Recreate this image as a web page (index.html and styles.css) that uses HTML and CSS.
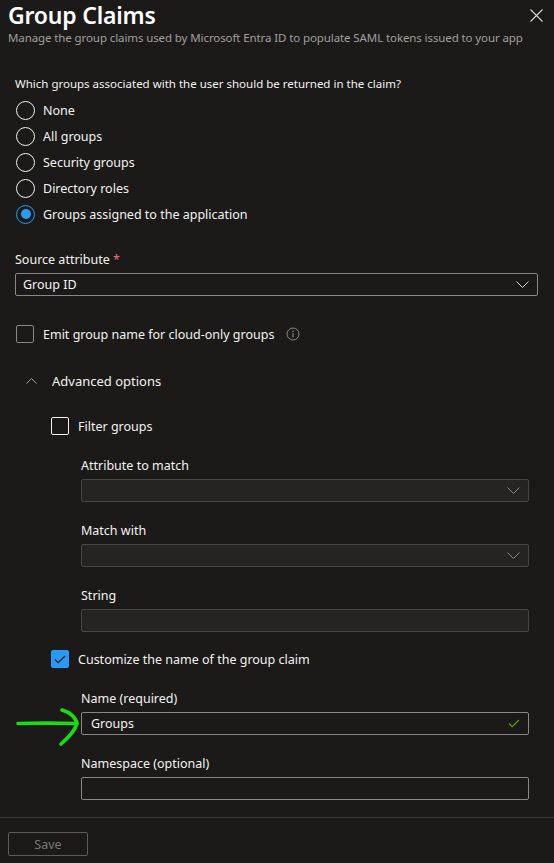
FILE: index.html
```html
<!DOCTYPE html>
<html lang="en">
<head>
  <meta charset="utf-8">
  <meta name="viewport" content="width=device-width, initial-scale=1.0">
  <title>Group Claims</title>
  <link rel="stylesheet" href="styles.css">
</head>
<body>
  <div class="panel">
    <div class="panel-header">
      <div>
        <h1>Group Claims</h1>
        <p class="subtitle">Manage the group claims used by Microsoft Entra ID to populate SAML tokens issued to your app</p>
      </div>
      <button class="close-button" aria-label="Close">
        <svg width="13" height="13" viewBox="0 0 13 13"><path d="M0.5 0.5 L12.5 12.5 M12.5 0.5 L0.5 12.5" stroke="#d6d6d6" stroke-width="1.1" fill="none"/></svg>
      </button>
    </div>

    <div class="panel-body">
      <p class="question">Which groups associated with the user should be returned in the claim?</p>
      <div class="radio-list">
        <label class="radio-row"><span class="radio"></span>None</label>
        <label class="radio-row"><span class="radio"></span>All groups</label>
        <label class="radio-row"><span class="radio"></span>Security groups</label>
        <label class="radio-row"><span class="radio"></span>Directory roles</label>
        <label class="radio-row"><span class="radio checked"></span>Groups assigned to the application</label>
      </div>

      <div class="field source-field">
        <div class="field-label">Source attribute <span class="required">*</span></div>
        <div class="select">
          <span>Group ID</span>
          <svg class="chevron" width="13" height="7" viewBox="0 0 13 7"><path d="M0.5 0.5 L6.5 6.5 L12.5 0.5" stroke="#d6d6d6" stroke-width="1" fill="none"/></svg>
        </div>
      </div>

      <label class="check-row emit-row">
        <span class="checkbox"></span>Emit group name for cloud-only groups
        <svg class="info" width="14" height="14" viewBox="0 0 14 14"><circle cx="7" cy="7" r="6" stroke="#8a8886" stroke-width="1" fill="none"/><circle cx="7" cy="4.2" r="0.8" fill="#8a8886"/><path d="M7 6 V10.5" stroke="#8a8886" stroke-width="1.1"/></svg>
      </label>

      <div class="advanced">
        <div class="advanced-toggle">
          <svg width="11" height="6" viewBox="0 0 11 6"><path d="M0.5 5.5 L5.5 0.5 L10.5 5.5" stroke="#a19f9d" stroke-width="1" fill="none"/></svg>
          <span>Advanced options</span>
        </div>

        <div class="advanced-body">
          <label class="check-row filter-row"><span class="checkbox light"></span>Filter groups</label>

          <div class="sub-fields">
            <div class="field">
              <div class="field-label">Attribute to match</div>
              <div class="select disabled">
                <svg class="chevron" width="13" height="7" viewBox="0 0 13 7"><path d="M0.5 0.5 L6.5 6.5 L12.5 0.5" stroke="#8a8886" stroke-width="1" fill="none"/></svg>
              </div>
            </div>
            <div class="field">
              <div class="field-label">Match with</div>
              <div class="select disabled">
                <svg class="chevron" width="13" height="7" viewBox="0 0 13 7"><path d="M0.5 0.5 L6.5 6.5 L12.5 0.5" stroke="#8a8886" stroke-width="1" fill="none"/></svg>
              </div>
            </div>
            <div class="field">
              <div class="field-label">String</div>
              <div class="select disabled"></div>
            </div>
          </div>

          <label class="check-row customize-row">
            <span class="checkbox checked">
              <svg width="12" height="9" viewBox="0 0 12 9"><path d="M1 4.5 L4.2 7.7 L11 1" stroke="#1b1a19" stroke-width="1.2" fill="none"/></svg>
            </span>Customize the name of the group claim
          </label>

          <div class="sub-fields name-fields">
            <div class="field name-field">
              <div class="field-label">Name (required)</div>
              <div class="select">
                <span>Groups</span>
                <svg class="valid" width="12" height="9" viewBox="0 0 12 9"><path d="M1 4.5 L4.2 7.7 L11 1" stroke="#57a300" stroke-width="1.1" fill="none"/></svg>
              </div>
              <svg class="arrow" width="66" height="50" viewBox="0 0 66 50">
                <path d="M3 24.5 C 20 24, 42 24, 62 24.5" stroke="#19dd12" stroke-width="3.6" fill="none" stroke-linecap="round"/>
                <path d="M47 11 C 55 13, 61 19, 62 24.5 C 60 32, 53 39, 46 45" stroke="#19dd12" stroke-width="3.6" fill="none" stroke-linecap="round"/>
              </svg>
            </div>
            <div class="field">
              <div class="field-label">Namespace (optional)</div>
              <div class="select"></div>
            </div>
          </div>
        </div>
      </div>
    </div>

    <div class="panel-footer">
      <button class="save-button" disabled>Save</button>
    </div>
  </div>
</body>
</html>
```

FILE: styles.css
```css
* {
  box-sizing: border-box;
}

html, body {
  margin: 0;
  padding: 0;
  background-color: #1b1a19;
}

body {
  font-family: "Noto Sans", "Open Sans", sans-serif;
  font-size: 12.5px;
  color: #f3f2f1;
}

.panel {
  width: 554px;
  height: 863px;
}

.panel-header {
  display: flex;
  justify-content: space-between;
  padding: 1px 0 0 8px;
}

h1 {
  margin: 0;
  font-size: 23px;
  font-weight: 600;
  line-height: 28px;
  color: #ffffff;
  letter-spacing: -0.2px;
}

.subtitle {
  margin: 1px 0 0;
  font-size: 11.5px;
  line-height: 16px;
  color: #a19f9d;
  letter-spacing: -0.1px;
}

.close-button {
  background: none;
  border: none;
  padding: 0;
  margin: 8px 11px 0 0;
  width: 13px;
  height: 13px;
  display: flex;
}

.panel-body {
  padding: 0 16px 0 15px;
}

.question {
  margin: 30px 0 5px;
  font-size: 11.5px;
  line-height: 16px;
}

.radio-list {
  display: flex;
  flex-direction: column;
}

.radio-row {
  display: flex;
  align-items: center;
  height: 26px;
  gap: 8px;
}

.radio {
  width: 19px;
  height: 19px;
  margin-left: 1px;
  border: 1px solid #f3f2f1;
  border-radius: 50%;
  display: flex;
  align-items: center;
  justify-content: center;
}

.radio.checked {
  border-color: #2899f5;
}

.radio.checked::after {
  content: "";
  width: 10px;
  height: 10px;
  border-radius: 50%;
  background-color: #2899f5;
}

.field {
  display: flex;
  flex-direction: column;
  gap: 3px;
}

.field-label {
  line-height: 20px;
}

.required {
  color: #f1707b;
}

.source-field {
  margin-top: 23px;
}

.select {
  height: 23px;
  border: 1px solid #8a8886;
  border-radius: 2px;
  display: flex;
  align-items: center;
  padding: 0 8px 0 7px;
}

.select .chevron,
.select .valid {
  margin-left: auto;
}

.select.disabled {
  background-color: #252423;
  border-color: #484644;
}

.check-row {
  display: flex;
  align-items: center;
  height: 20px;
  gap: 9px;
}

.checkbox {
  width: 18px;
  height: 18px;
  border: 1px solid #8a8886;
  border-radius: 2px;
  display: flex;
  align-items: center;
  justify-content: center;
}

.checkbox.light {
  border-color: #f3f2f1;
}

.checkbox.checked {
  border-color: #2899f5;
  background-color: #2899f5;
}

.emit-row {
  margin-top: 28px;
  padding-left: 1px;
}

.info {
  margin-left: 3px;
}

.advanced {
  margin-top: 27px;
}

.advanced-toggle {
  display: flex;
  align-items: center;
  height: 20px;
  gap: 15px;
  padding-left: 11px;
  font-size: 13px;
}

.advanced-body {
  padding-left: 36px;
}

.filter-row {
  margin-top: 25px;
}

.sub-fields {
  display: flex;
  flex-direction: column;
  gap: 19px;
  padding: 0 9px 0 30px;
  margin-top: 20px;
}

.name-fields {
  margin-top: 20px;
}

.customize-row {
  margin-top: 17px;
}

.name-field {
  position: relative;
}

.name-field .select span {
  padding-left: 2px;
}

.arrow {
  position: absolute;
  left: -66px;
  top: 10px;
}

.panel-footer {
  margin-top: 17px;
  border-top: 1px solid #3b3a39;
  padding: 14px 8px;
}

.save-button {
  width: 80px;
  height: 24px;
  font-family: inherit;
  font-size: 12.5px;
  color: #797775;
  background-color: #1b1a19;
  border: 1px solid #5c5b5a;
  border-radius: 2px;
}
```
